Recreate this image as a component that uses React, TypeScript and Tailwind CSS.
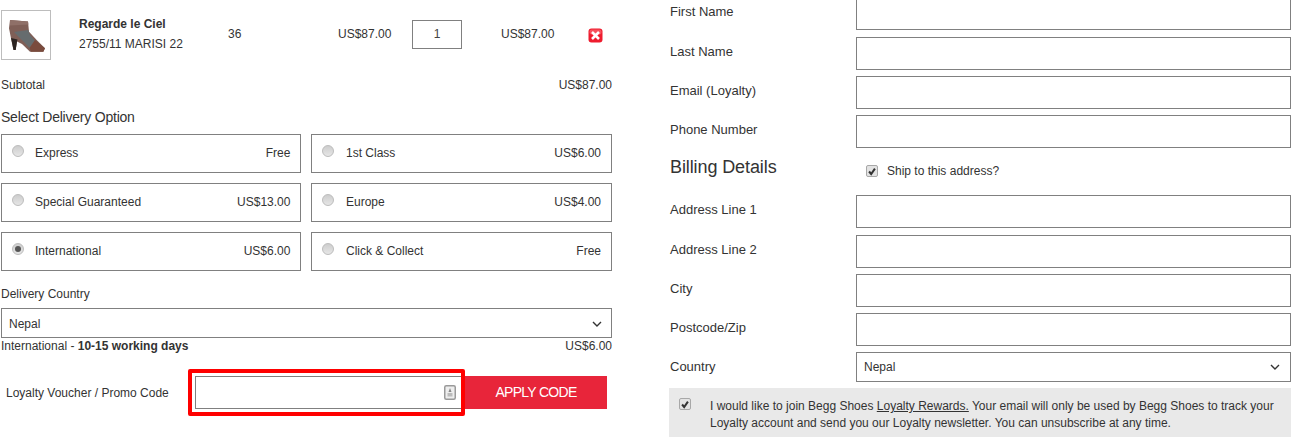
import React from "react";

const F = "[font-family:'Liberation_Sans',Arial,sans-serif]";

function Shoe() {
  return (
    <svg viewBox="0 0 48 48" className="w-[48px] h-[48px] blur-[0.4px]">
      <path d="M8 9 L26 10.5 L27 20.7 L34.7 29 L43 37.3 L41.3 40.7 L28 40.7 L20 33 L15 30.5 L13.7 39 L11.5 39 L9 27.3 L7 17.3 Z" fill="#7f5f57" />
      <path d="M8 9 L26 10.5 L26.4 13.5 L8 14.5 Z" fill="#8f7068" />
      <path d="M12 21 L26.3 19 L28 24 L33 29.7 L27.5 37 L23 32 L18 27.3 Z" fill="#666c6e" />
      <path d="M33 29 L43 37.3 L41.3 40.7 L29 40.7 L27.5 37 Z" fill="#7a4b3d" />
      <path d="M9 27 L15.5 28.5 L15 30.5 L13.7 39 L11.5 39 Z" fill="#2c2522" />
    </svg>
  );
}

function Remove() {
  return (
    <svg viewBox="0 0 15 15" className="w-[15px] h-[15px]">
      <rect x="0.5" y="0.5" width="14" height="14" rx="3" fill="#ee1c2e" />
      <rect x="1.5" y="1.5" width="12" height="5" rx="2" fill="#f8505c" />
      <path d="M4 4 L11 11 M11 4 L4 11" stroke="#fff" strokeWidth="2.6" />
    </svg>
  );
}

function Radio({ on }: { on?: boolean }) {
  return (
    <span className="w-[12px] h-[12px] rounded-full border border-[#bcbcbc] bg-gradient-to-b from-[#cdcdcd] to-[#e6e6e6] flex items-center justify-center shrink-0">
      {on && <span className="w-[6px] h-[6px] rounded-full bg-[#555]" />}
    </span>
  );
}

function Check() {
  return (
    <span className="w-[12px] h-[12px] rounded-[2px] border border-[#a8a8a8] bg-[#e3e3e3] flex items-center justify-center shrink-0">
      <svg viewBox="0 0 12 12" className="w-[11px] h-[11px]">
        <path d="M2.5 6 L5 9 L9.5 2.5" fill="none" stroke="#333" strokeWidth="2.4" />
      </svg>
    </span>
  );
}

function Chevron() {
  return (
    <svg viewBox="0 0 10 6" className="w-[10px] h-[6px]">
      <path d="M1 1 L5 5 L9 1" fill="none" stroke="#333" strokeWidth="1.4" />
    </svg>
  );
}

function Option({ name, price, on, right }: { name: string; price: string; on?: boolean; right?: boolean }) {
  return (
    <div className={`h-[39px] border border-[#808080] flex pl-[10px] ${right ? "pr-[10px]" : "pr-[9.6px]"}`}>
      <div className="mt-[10px]"><Radio on={on} /></div>
      <span className={`${right ? "ml-[12px]" : "ml-[11px]"} mt-[11px] leading-[15px]`}>{name}</span>
      <span className="ml-auto mt-[11px] leading-[15px]">{price}</span>
    </div>
  );
}

function Row({ label, select, tall }: { label: string; select?: boolean; tall?: boolean }) {
  return (
    <div className={`flex ${select ? "h-[36px]" : tall ? "h-[40px]" : "h-[39px]"}`}>
      <div className="w-[187px] text-[13px] leading-[15px] pt-[7px] pl-[1px]">{label}</div>
      {select ? (
        <div className="w-[435px] h-[30px] border border-[#808080] flex items-center justify-between pl-[7px] pr-[10px] text-[12px]">
          <span>Nepal</span>
          <Chevron />
        </div>
      ) : (
        <div className="w-[435px] h-[33px] border border-[#808080]" />
      )}
    </div>
  );
}

export default function App() {
  return (
    <div className={`${F} w-[1292px] h-[437px] overflow-hidden bg-white text-[#333] text-[12px] flex`}>
      <div className="w-[611px] ml-[1px] shrink-0 flex flex-col">
        <div className="flex h-[60px] pt-[10px]">
          <div className="w-[50px] h-[50px] border border-[#bdbdbd] flex items-center justify-center shrink-0"><Shoe /></div>
          <div className="ml-[28px] w-[149px] mt-[6px]">
            <div className="font-bold leading-[17px]">Regarde le Ciel</div>
            <div className="leading-[17px] mt-[3px]">2755/11 MARISI 22</div>
          </div>
          <div className="w-[110px] mt-[17px] leading-[15px]">36</div>
          <div className="w-[74px] mt-[17px] leading-[15px]">US$87.00</div>
          <div className="w-[50px] h-[29px] mt-[10px] border border-[#808080] flex items-center justify-center text-[#444] pb-[1px]">1</div>
          <div className="ml-[39px] w-[87px] mt-[17px] leading-[15px]">US$87.00</div>
          <div className="mt-[18px]"><Remove /></div>
        </div>
        <div className="flex justify-between mt-[18px] leading-[15px]">
          <span>Subtotal</span>
          <span>US$87.00</span>
        </div>
        <div className="text-[14px] tracking-[-0.22px] leading-[16px] mt-[16px]">Select Delivery Option</div>
        <div className="grid grid-cols-[300px_301px] gap-x-[10px] gap-y-[10px] mt-[9px]">
          <Option name="Express" price="Free" />
          <Option name="1st Class" price="US$6.00" right />
          <Option name="Special Guaranteed" price="US$13.00" />
          <Option name="Europe" price="US$4.00" right />
          <Option name="International" price="US$6.00" on />
          <Option name="Click &amp; Collect" price="Free" right />
        </div>
        <div className="leading-[15px] mt-[16px]">Delivery Country</div>
        <div className="h-[30px] mt-[6px] border border-[#808080] flex items-center justify-between pl-[7px] pr-[9px] pt-[1px]">
          <span>Nepal</span>
          <Chevron />
        </div>
        <div className="flex justify-between leading-[15px] mt-[1px]">
          <span>International - <b>10-15 working days</b></span>
          <span>US$6.00</span>
        </div>
        <div className="flex items-center mt-[22px] ml-[5px]">
          <span className="w-[189px] shrink-0 leading-[15px] pt-[2px]">Loyalty Voucher / Promo Code</span>
          <div className="relative w-[270px] h-[33px] border border-[#808080] flex items-center justify-end pr-[8px]">
            <svg viewBox="0 0 12 15" className="w-[12px] h-[15px]">
              <rect x="0.75" y="0.75" width="10.5" height="13.5" rx="1.5" fill="#eee" stroke="#9a9a9a" strokeWidth="1.5" />
              <path d="M6 3 L7.5 7 L4.5 7 Z" fill="#888" />
              <rect x="3.5" y="8" width="5" height="3.5" fill="#bbb" />
            </svg>
            <div className="absolute left-[-8px] top-[-8px] w-[277px] h-[47px] border-[4px] border-[#f00] rounded-[2px] z-10" />
          </div>
          <div className="w-[142px] h-[33px] bg-[#e8253a] text-white text-[14px] tracking-[-0.7px] flex items-center justify-center">APPLY CODE</div>
        </div>
      </div>
      <div className="w-[622px] ml-[57px] shrink-0 flex flex-col mt-[-3px]">
        <Row label="First Name" tall />
        <Row label="Last Name" />
        <Row label="Email (Loyalty)" />
        <Row label="Phone Number" />
        <div className="h-[41px] flex">
          <div className="w-[198px] text-[18px] tracking-[-0.1px] leading-[22px] pt-[2px] pl-[1px]">Billing Details</div>
          <div className="flex items-center mt-[5px] h-[24px] -ml-[1px]">
            <Check />
            <span className="ml-[9px]">Ship to this address?</span>
          </div>
        </div>
        <Row label="Address Line 1" tall />
        <Row label="Address Line 2" />
        <Row label="City" />
        <Row label="Postcode/Zip" />
        <Row label="Country" select />
        <div className="h-[49px] bg-[#e9e9e9] flex pl-[10px] pr-[10px] pt-[10px]">
          <div><Check /></div>
          <p className="ml-[19px] leading-[17px]">
            I would like to join Begg Shoes <span className="underline">Loyalty Rewards.</span> Your email will only be used by Begg Shoes to track your Loyalty account and send you our Loyalty newsletter. You can unsubscribe at any time.
          </p>
        </div>
      </div>
    </div>
  );
}
